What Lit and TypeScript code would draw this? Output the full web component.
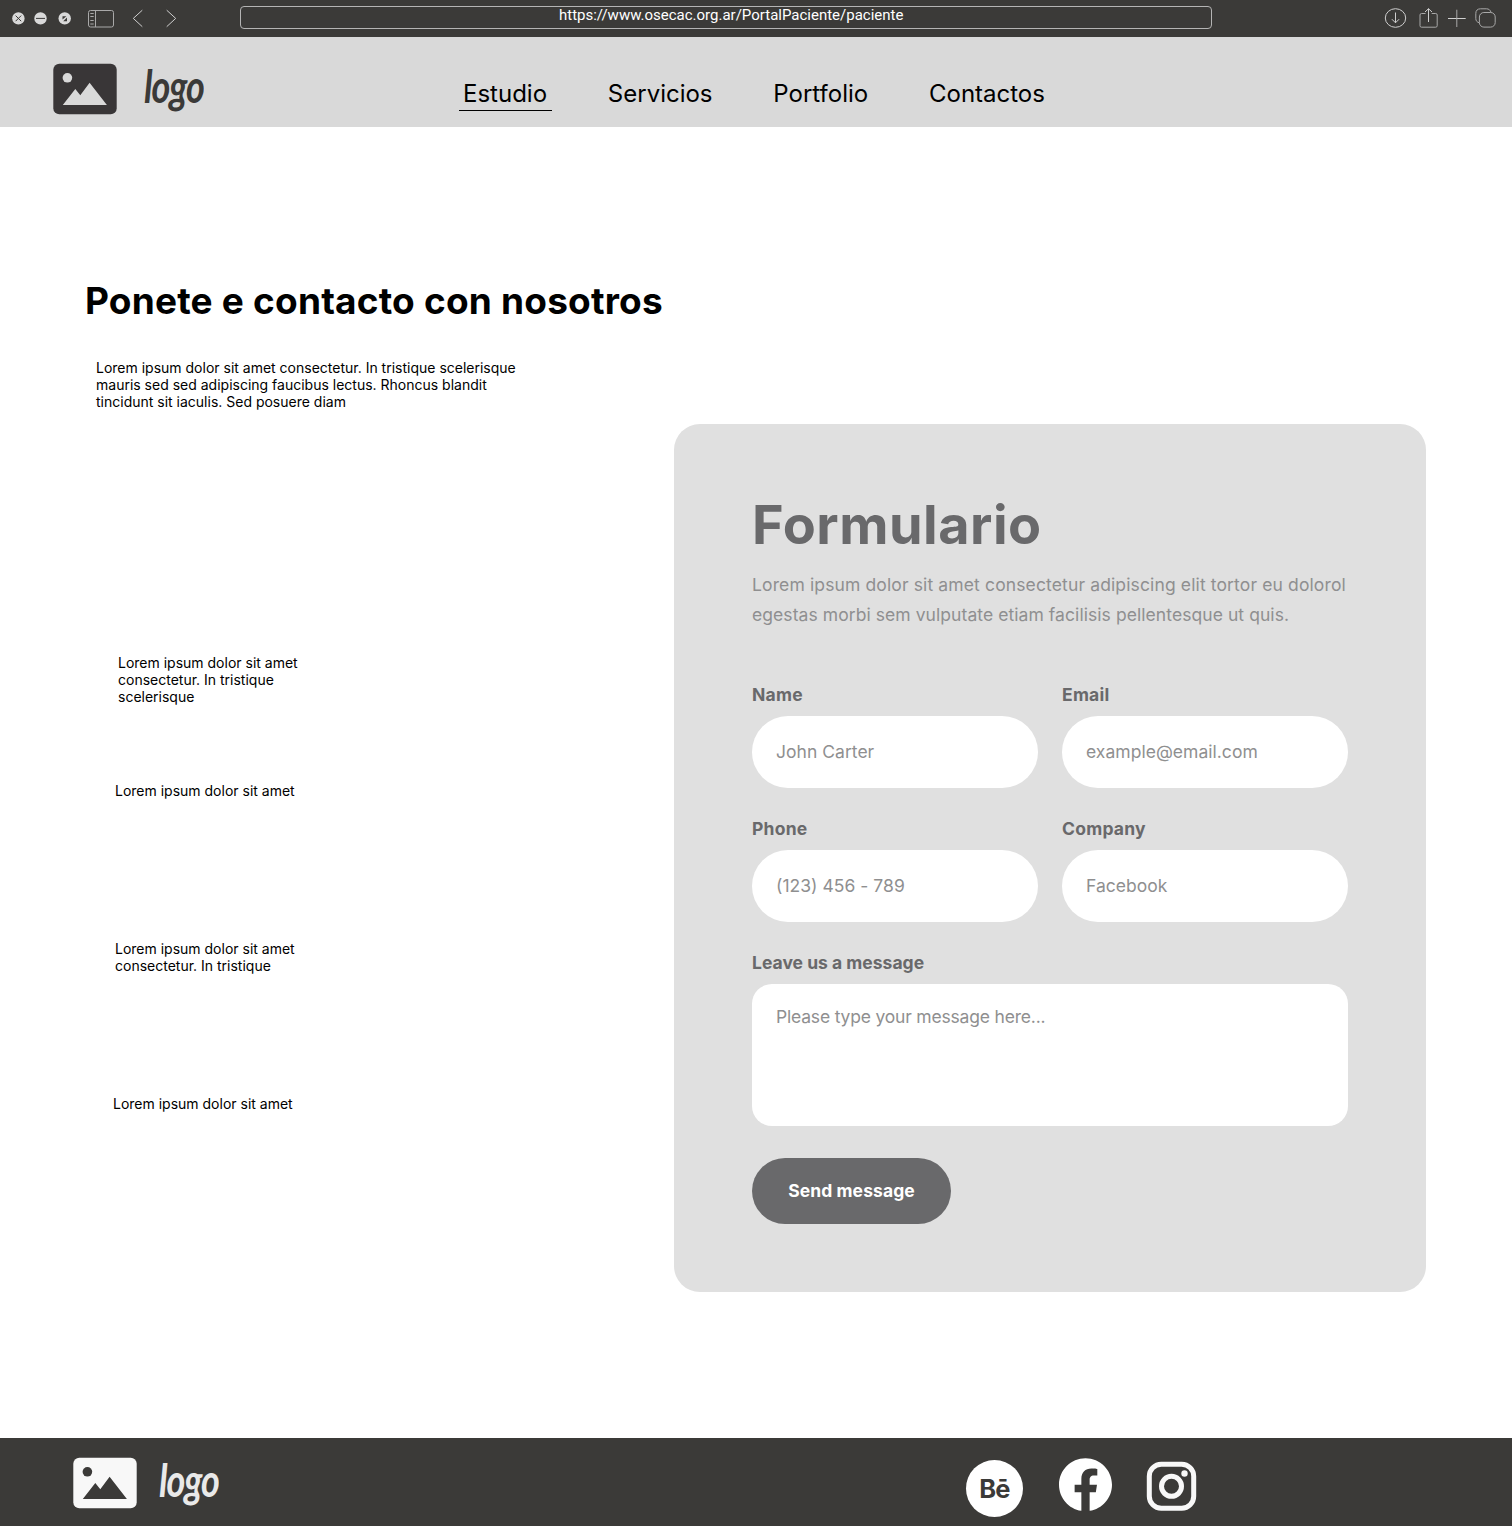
import { LitElement, html, css, svg } from "lit";
import { customElement, property } from "lit/decorators.js";
import { classMap } from "lit/directives/class-map.js";

@customElement("browser-bar")
export class BrowserBar extends LitElement {
  static styles = css`
    :host { display: flex; height: 37px; background: #3b3a38; }
    svg { display: block; flex: none; fill: none; }
    .line { stroke: #cfcfcf; stroke-width: 1; }
    .soft { stroke: #a9a9a9; stroke-width: 1; }
    .dot { fill: #d9d9d9; }
    .mark { stroke: #3b3a38; stroke-width: 1; }
    .glyph { fill: #3b3a38; }
    .url {
      box-sizing: border-box;
      width: 972px;
      height: 23px;
      margin: 6px 171px 0 0;
      border: 1px solid #b4b4b4;
      border-radius: 4px;
      color: #fff;
      font: 15px/16px "Roboto", sans-serif;
      padding-left: 318px;
      white-space: nowrap;
    }
  `;
  render() {
    return html`
      <svg width="240" height="37" viewBox="0 0 240 37">
        <circle class="dot" cx="18.4" cy="18.4" r="6.2" />
        <path class="mark" d="M15.6 15.6l5.6 5.6M21.2 15.6l-5.6 5.6" />
        <circle class="dot" cx="40.5" cy="18.4" r="6.2" />
        <path class="mark" d="M36 18.4h9" />
        <circle class="dot" cx="64.7" cy="18.4" r="6.2" />
        <path class="glyph" d="M62.5 16.2h3.9l-3.9 3.4zM67 17.6v3.7h-3.8z" />
        <rect class="soft" x="88.5" y="10.5" width="25" height="16.5" rx="2" />
        <path class="soft" d="M95.5 10.5v16.5M90.3 13.5h3.4M90.3 16.5h3.4M90.3 20.5h3.4M90.3 24h3.4" />
        <path class="line" d="M142.3 10.2l-9 8.2 9 8.3M166.7 10.2l9 8.2-9 8.3" />
      </svg>
      <div class="url">https://www.osecac.org.ar/PortalPaciente/paciente</div>
      <svg width="129" height="37" viewBox="1383 0 129 37">
        <ellipse class="line" cx="1395.5" cy="18" rx="10.2" ry="9.3" />
        <path class="line" d="M1395.5 12.5v10.3M1391.9 19.2l3.6 3.6 3.6-3.6" />
        <path class="soft" d="M1425.5 13.5h-4a1.5 1.5 0 0 0-1.5 1.5v10.7a1.5 1.5 0 0 0 1.5 1.5h14.2a1.5 1.5 0 0 0 1.5-1.5V15a1.5 1.5 0 0 0-1.5-1.5h-4" />
        <path class="line" d="M1428.5 22V8.7M1425 12l3.5-3.3 3.5 3.3" />
        <path class="line" d="M1448 18.5h17.7" />
        <path class="soft" d="M1456.8 9.7v17.3" />
        <rect class="soft" x="1479.4" y="12.5" width="15.8" height="14.6" rx="4.5" />
        <path class="soft" d="M1479.2 22.8c-2-.5-3.4-2-3.4-4.2v-5.1c0-3 1.7-4.7 4.7-4.7h6c2.3 0 3.9 1.3 4.5 3.5" />
      </svg>
    `;
  }
}

@customElement("brand-mark")
export class BrandMark extends LitElement {
  @property({ type: Boolean, reflect: true }) light = false;
  static styles = css`
    :host { display: flex; --ink: #393637; --word: #3b3a38; --cut: #d9d9d9; --gap: 27px; }
    :host([light]) { --ink: #f8f8f8; --word: #e9e9e9; --cut: #3b3a38; --gap: 22px; }
    svg { display: block; flex: none; }
    .plate { fill: var(--ink); }
    .cut { fill: var(--cut); }
    .word {
      height: 40px;
      margin: 5px 0 0 var(--gap);
      color: var(--word);
      font: italic 700 36px/40px "Lato", sans-serif;
      letter-spacing: -1px;
      transform: scaleY(1.27);
      transform-origin: 0 32px;
    }
  `;
  render() {
    return html`
      <svg width="64" height="52" viewBox="0 0 64 52">
        <rect class="plate" x="0.3" y="0.7" width="63.4" height="50.6" rx="6" />
        <circle class="cut" cx="14.4" cy="14.8" r="4.8" />
        <path class="cut" d="M9.8 41.9l12.5-16 5 6.4 9.3-12.5 17.3 22.1z" />
      </svg>
      <span class="word">logo</span>
    `;
  }
}

@customElement("site-nav")
export class SiteNav extends LitElement {
  static styles = css`
    :host { display: flex; height: 90px; background: #d9d9d9; box-sizing: border-box; padding: 26px 0 0 53px; }
    brand-mark { width: 406px; flex: none; }
    nav { display: flex; padding-top: 16px; gap: 52.8px; }
    .link {
      height: 32px;
      box-sizing: border-box;
      padding: 0 4px;
      color: #000;
      font: 24px/30px "Inter", sans-serif;
      text-decoration: none;
      border-bottom: 1px solid transparent;
    }
    .active { border-bottom-color: #000; padding-right: 5px; margin-right: -1px; }
  `;
  private links = ["Estudio", "Servicios", "Portfolio", "Contactos"];
  render() {
    return html`
      <brand-mark></brand-mark>
      <nav>
        ${this.links.map(
          (l, i) => html`<a class=${classMap({ link: true, active: i === 0 })}>${l}</a>`,
        )}
      </nav>
    `;
  }
}

@customElement("contact-form")
export class ContactForm extends LitElement {
  static styles = css`
    :host {
      display: block;
      box-sizing: border-box;
      width: 752px;
      height: 868px;
      padding: 68px 78px;
      border-radius: 26px;
      background: #e0e0e0;
      color: #69696b;
      font-family: "Inter", sans-serif;
      font-size: 17.5px;
    }
    h2 { margin: 0; font-size: 54px; line-height: 66px; font-weight: 650; letter-spacing: 0.5px; }
    .intro { margin: 12px 0 54px; color: #8f8f90; line-height: 30px; white-space: nowrap; }
    .wide { display: block; letter-spacing: 0.13px; }
    .narrow { display: block; letter-spacing: 0.07px; }
    .grid { display: grid; grid-template-columns: 286px 286px; column-gap: 24px; row-gap: 30px; }
    .field { display: flex; flex-direction: column; }
    .full { grid-column: 1 / 3; }
    .label { font-weight: 650; line-height: 22px; margin-bottom: 10px; letter-spacing: 0.25px; }
    .full .label { letter-spacing: 0.01px; }
    .box {
      box-sizing: border-box;
      height: 72px;
      padding: 0 24px;
      border-radius: 36px;
      background: #fff;
      color: #8f8f90;
      line-height: 72px;
      letter-spacing: 0.03px;
    }
    .area { height: 142px; padding-top: 18px; border-radius: 20px; line-height: 30px; letter-spacing: -0.19px; }
    .send {
      display: block;
      width: 199px;
      height: 66px;
      margin-top: 32px;
      padding: 0;
      border: 0;
      border-radius: 33px;
      background: #69696b;
      color: #fff;
      font: 650 17.5px/66px "Inter", sans-serif;
      letter-spacing: 0.08px;
      text-align: center;
    }
  `;
  private fields = [
    ["Name", "John Carter"],
    ["Email", "example@email.com"],
    ["Phone", "(123) 456 - 789"],
    ["Company", "Facebook"],
  ];
  render() {
    return html`
      <h2>Formulario</h2>
      <div class="intro">
        <span class="wide">Lorem ipsum dolor sit amet consectetur adipiscing elit tortor eu dolorol</span>
        <span class="narrow">egestas morbi sem vulputate etiam facilisis pellentesque ut quis.</span>
      </div>
      <div class="grid">
        ${this.fields.map(
          ([label, hint]) => html`
            <div class="field">
              <span class="label">${label}</span>
              <div class="box">${hint}</div>
            </div>
          `,
        )}
        <div class="field full">
          <span class="label">Leave us a message</span>
          <div class="box area">Please type your message here...</div>
        </div>
      </div>
      <button class="send">Send message</button>
    `;
  }
}

@customElement("site-footer")
export class SiteFooter extends LitElement {
  static styles = css`
    :host { display: flex; box-sizing: border-box; height: 88px; background: #3b3a38; padding: 19px 0 0 73px; }
    brand-mark { width: 893.4px; flex: none; }
    svg { display: block; flex: none; }
    .white { fill: #fff; }
    .behance {
      box-sizing: border-box;
      width: 57px;
      height: 57px;
      margin: 3.4px 35.6px 0 0;
      padding-right: 1px;
      border-radius: 50%;
      background: #fff;
      color: #3b3a38;
      font: 650 25.5px/58px "Inter", sans-serif;
      letter-spacing: -1px;
      text-align: center;
    }
    .facebook { margin: 1px 34px 0 0; }
    .instagram { margin-top: 4px; }
    .ring { fill: none; stroke: #f8f8f8; stroke-width: 5; }
    .spot { fill: #f8f8f8; }
  `;
  render() {
    const facebook = svg`<path class="white" d="M24 12.073c0-6.627-5.373-12-12-12s-12 5.373-12 12c0 5.99 4.388 10.954 10.125 11.854v-8.385H7.078v-3.47h3.047V9.43c0-3.007 1.792-4.669 4.533-4.669 1.312 0 2.686.235 2.686.235v2.953H15.83c-1.491 0-1.956.925-1.956 1.874v2.25h3.328l-.532 3.47h-2.796v8.385C19.612 23.027 24 18.062 24 12.073z"/>`;
    return html`
      <brand-mark light></brand-mark>
      <div class="behance">Bē</div>
      <svg class="facebook" width="53" height="53" viewBox="0 0 24 24">${facebook}</svg>
      <svg class="instagram" width="51" height="50" viewBox="0 0 51 50">
        <rect class="ring" x="3.3" y="3.2" width="44.4" height="44" rx="12" />
        <circle class="ring" cx="25.5" cy="25.3" r="10" />
        <circle class="spot" cx="38.5" cy="12.5" r="3.2" />
      </svg>
    `;
  }
}

@customElement("app-root")
export class AppRoot extends LitElement {
  static styles = css`
    :host { display: block; width: 1512px; background: #fff; }
    main { display: flex; height: 1311px; }
    .side {
      box-sizing: border-box;
      width: 674px;
      flex: none;
      padding: 150px 0 0 85px;
      color: #000;
      font: 14px/17px "Inter", sans-serif;
      white-space: nowrap;
    }
    h1 { margin: 0; font-size: 37px; line-height: 48px; font-weight: 660; letter-spacing: 0.2px; }
    p { margin: 0; }
    .lead { margin: 34px 0 0 11px; }
    .item-a { margin: 244px 0 0 33px; }
    .item-b { margin: 77px 0 0 30px; }
    .item-c { margin: 141px 0 0 30px; }
    .item-d { margin: 121px 0 0 28px; }
    contact-form { margin-top: 297px; }
  `;
  render() {
    return html`
      <browser-bar></browser-bar>
      <site-nav></site-nav>
      <main>
        <section class="side">
          <h1>Ponete e contacto con nosotros</h1>
          <p class="lead">
            Lorem ipsum dolor sit amet consectetur. In tristique scelerisque<br />mauris sed sed adipiscing faucibus
            lectus. Rhoncus blandit<br />tincidunt sit iaculis. Sed posuere diam
          </p>
          <p class="item-a">Lorem ipsum dolor sit amet<br />consectetur. In tristique<br />scelerisque</p>
          <p class="item-b">Lorem ipsum dolor sit amet</p>
          <p class="item-c">Lorem ipsum dolor sit amet<br />consectetur. In tristique</p>
          <p class="item-d">Lorem ipsum dolor sit amet</p>
        </section>
        <contact-form></contact-form>
      </main>
      <site-footer></site-footer>
    `;
  }
}
